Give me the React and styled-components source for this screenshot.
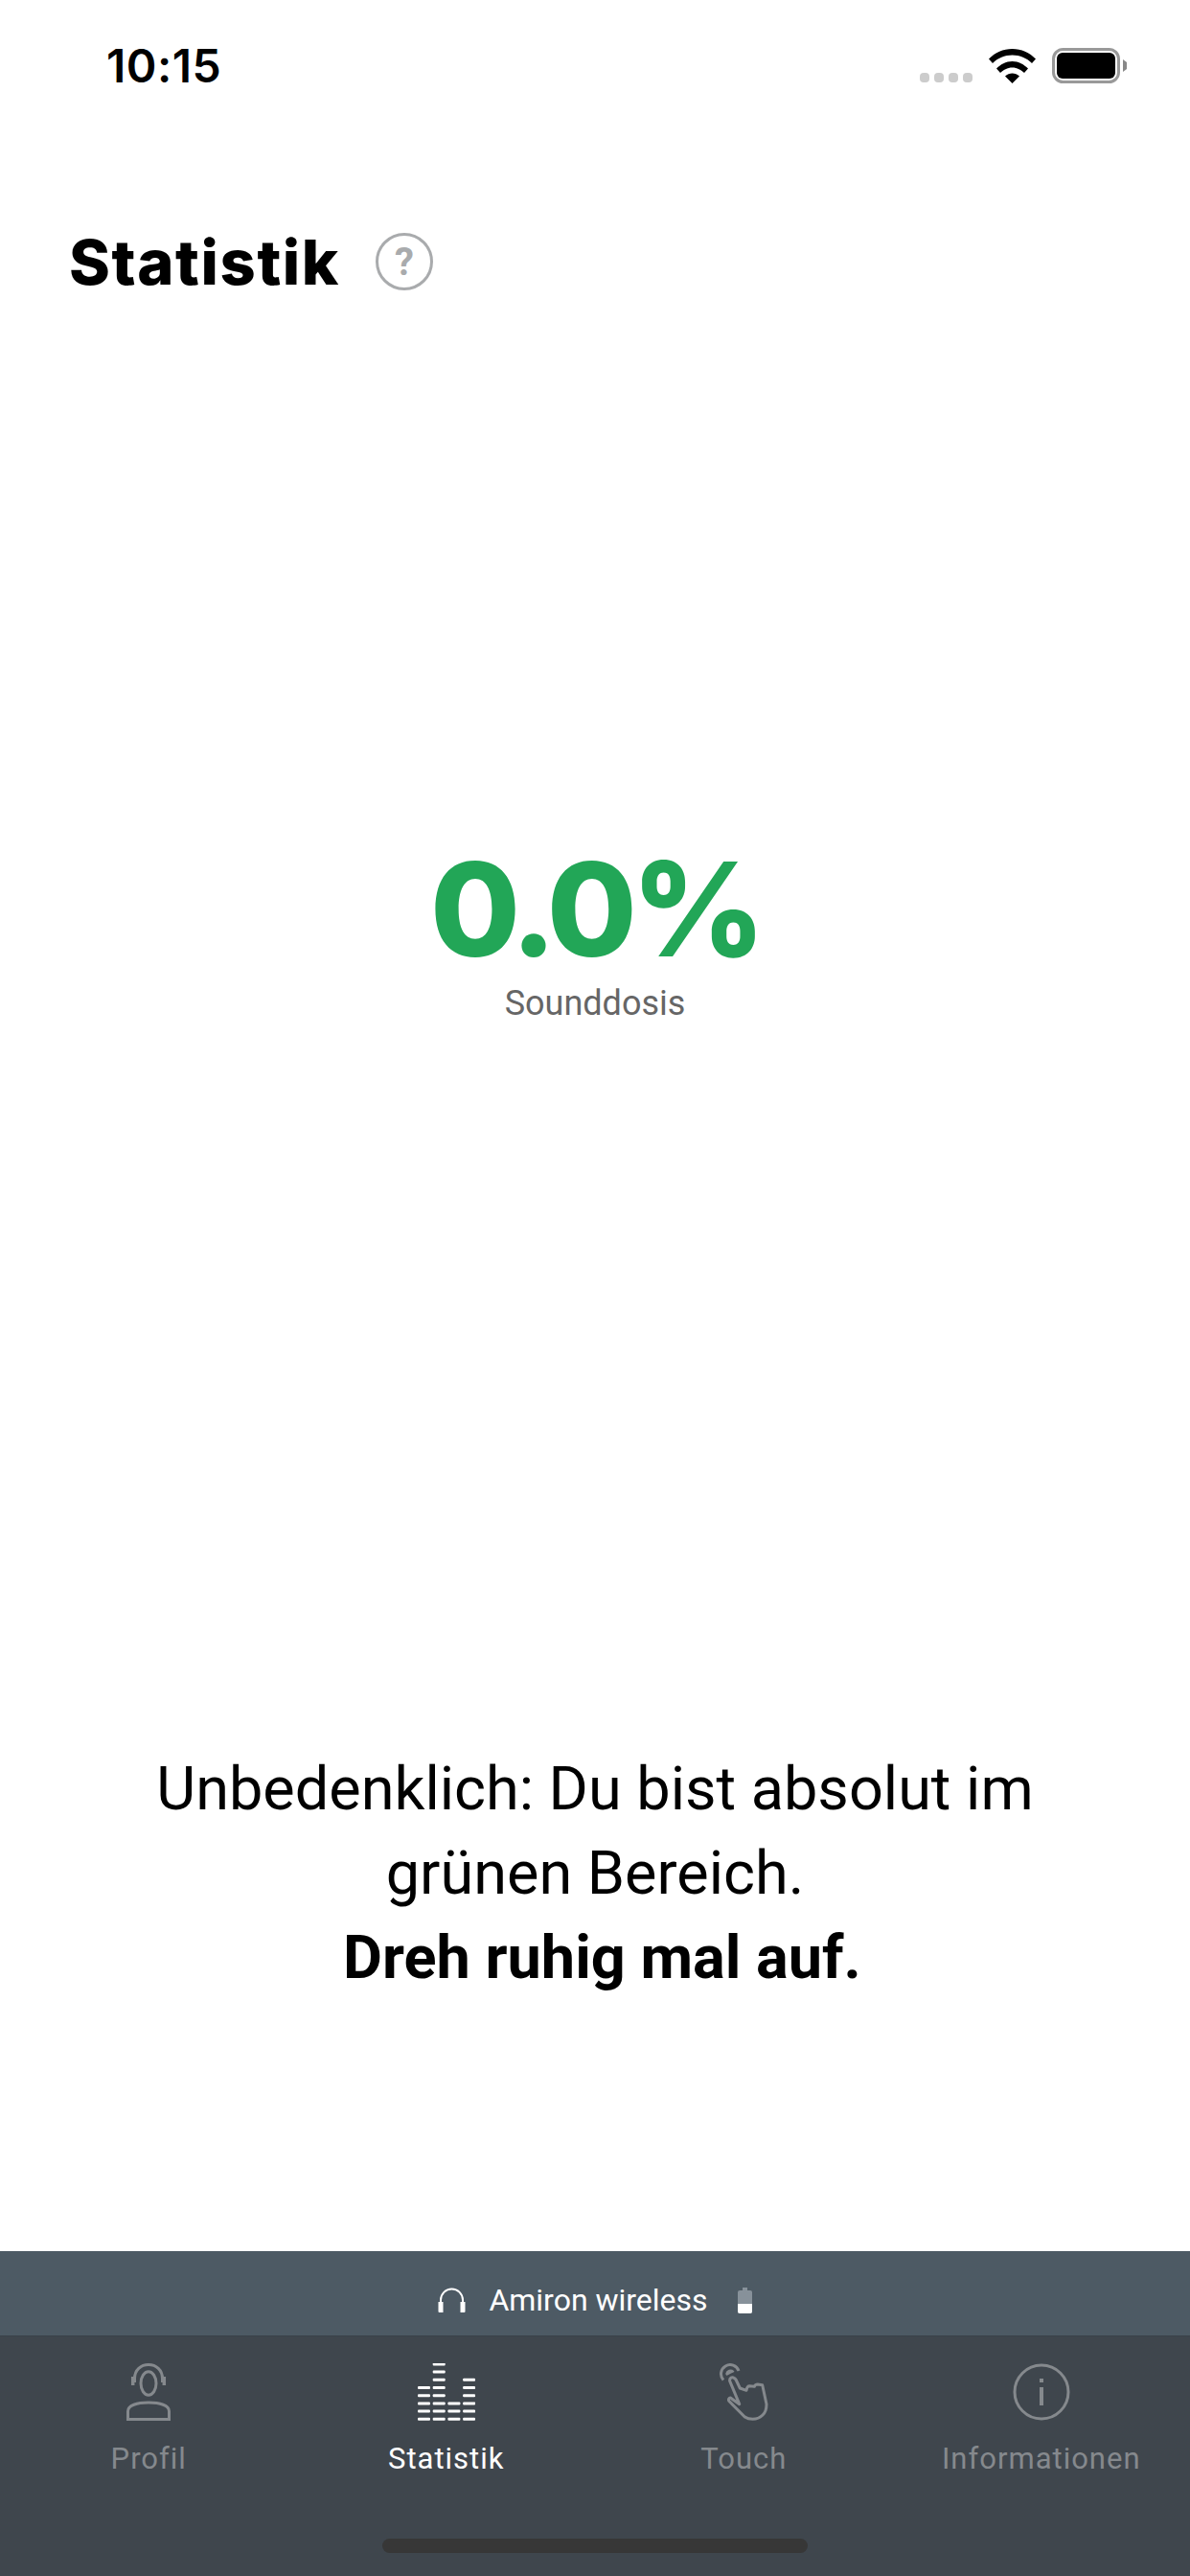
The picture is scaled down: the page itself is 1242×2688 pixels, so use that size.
import React from "react";
import styled, { createGlobalStyle } from "styled-components";

const GlobalStyle = createGlobalStyle`
  html, body {
    margin: 0;
    padding: 0;
    background: #fff;
    font-family: Roboto, "Liberation Sans", sans-serif;
  }
`;

const Page = styled.div`
  width: 1242px;
  height: 2688px;
  display: flex;
  flex-direction: column;
  background: #fff;
  overflow: hidden;
`;

const StatusBar = styled.div`
  height: 136px;
  flex: none;
  display: flex;
  align-items: center;
  justify-content: space-between;
  padding: 0 65px 0 111px;
`;

const Time = styled.span`
  font-family: Inter, sans-serif;
  font-size: 48px;
  font-weight: 600;
  letter-spacing: 0.5px;
  color: #000;
`;

const StatusIcons = styled.div`
  display: flex;
  align-items: flex-end;
  gap: 17px;
`;

const SignalDots = styled.div`
  display: flex;
  gap: 5px;
  margin-bottom: 1px;
`;

const SignalDot = styled.span`
  width: 10px;
  height: 10px;
  border-radius: 4px;
  background: #cccccc;
`;

const Header = styled.header`
  flex: none;
  height: 60px;
  margin-top: 107px;
  padding-left: 72px;
  display: flex;
  align-items: center;
  gap: 37px;
`;

const Title = styled.h1`
  margin: 0;
  font-family: Inter, sans-serif;
  font-size: 65px;
  font-weight: 800;
  letter-spacing: 1.6px;
  color: #000;
`;

const HelpBadge = styled.span`
  width: 60px;
  height: 60px;
  box-sizing: border-box;
  border: 3px solid #a9abad;
  border-radius: 50%;
  display: flex;
  align-items: center;
  justify-content: center;
  font-size: 40px;
  font-weight: 700;
  color: #a9abad;
`;

const Main = styled.main`
  flex: 1;
  display: flex;
  flex-direction: column;
  align-items: center;
  padding-top: 576px;
`;

const Percent = styled.div`
  font-family: Inter, sans-serif;
  font-size: 136px;
  line-height: 140px;
  font-weight: 800;
  letter-spacing: -6px;
  color: #22a657;
`;

const PercentLabel = styled.div`
  margin-top: 8px;
  font-size: 36px;
  line-height: 40px;
  color: #666666;
`;

const Message = styled.p`
  margin: auto 0 262px;
  width: 1000px;
  text-align: center;
  font-size: 63px;
  line-height: 88px;
  color: #000;
`;

const MessageStrong = styled.strong`
  display: block;
  font-weight: 700;
  margin-left: 15px;
`;

const DeviceBar = styled.div`
  flex: none;
  height: 88px;
  box-sizing: border-box;
  padding-top: 14px;
  display: flex;
  align-items: center;
  justify-content: center;
  background: #4d5a64;
  color: #fff;
  font-size: 32px;
`;

const DeviceName = styled.span`
  margin: 0 31px 0 24px;
`;

const TabBar = styled.nav`
  flex: none;
  height: 251px;
  box-sizing: border-box;
  border-top: 1px solid #394149;
  padding-top: 28px;
  display: flex;
  flex-direction: column;
  align-items: center;
  background: #3f464d;
`;

const Tabs = styled.div`
  width: 100%;
  display: grid;
  grid-template-columns: repeat(4, 1fr);
`;

const Tab = styled.div`
  display: flex;
  flex-direction: column;
  align-items: center;
  color: ${({ $active }) => ($active ? "#ffffff" : "#85898d")};
`;

const TabIcon = styled.div`
  height: 60px;
  display: flex;
  align-items: center;
  justify-content: center;
`;

const TabLabel = styled.span`
  margin-top: 22px;
  font-size: 31px;
  line-height: 36px;
  letter-spacing: 1px;
`;

const HomeIndicator = styled.div`
  width: 444px;
  height: 15px;
  margin-top: 65px;
  border-radius: 8px;
  background: #373737;
`;

const WifiIcon = () => (
  <svg width="49" height="36" viewBox="0 0 49 36" fill="#000">
    <path d="M0 10.5C6.5 4 15 0 24.5 0S42.5 4 49 10.5L45 15C39.5 9.5 32.5 6.5 24.5 6.5S9.5 9.5 4 15Z" />
    <path d="M8 20.5C12 16.5 18 13 24.5 13S37 16.5 41 20.5L37 25C34 22 29.5 19.5 24.5 19.5S15 22 12 25Z" />
    <path d="M17 28.5C19 26.5 22 25.5 24.5 25.5S30 26.5 32 28.5L24.5 36Z" />
  </svg>
);

const BatteryIcon = () => (
  <svg width="79" height="37" viewBox="0 0 79 37">
    <rect x="1.5" y="1.5" width="68" height="34" rx="10" fill="none" stroke="#999" strokeWidth="3" />
    <rect x="5" y="5" width="61" height="27" rx="6" fill="#000" />
    <path d="M74 12L78 15V22L74 25Z" fill="#888" />
  </svg>
);

const ProfileIcon = () => (
  <svg width="46" height="60" viewBox="0 0 46 60" fill="none" stroke="currentColor" strokeWidth="3">
    <ellipse cx="23" cy="21" rx="8" ry="12.2" />
    <path d="M8.500 20V16C8.500 7 15 1.500 23 1.500S37.500 7 37.500 16V20" />
    <path d="M6.700 14V23M39.300 14V23" strokeWidth="3.500" />
    <path d="M1.500 58.500V50C1.500 44 11 41 23 41S44.500 44 44.500 50V58.500Z" />
  </svg>
);

// column heights of the little equalizer, rows counted from the bottom
const eqColumns = [5, 8, 3, 6];

const StatsIcon = () => (
  <svg width="60" height="60" viewBox="0 0 60 60" fill="currentColor">
    {eqColumns.map((rows, col) =>
      Array.from({ length: rows }).map((_, row) => (
        <rect key={`${col}-${row}`} x={col * 15.7} y={56.8 - row * 8.2} width="13" height="3" rx="1" />
      ))
    )}
  </svg>
);

const TouchIcon = () => (
  <svg width="52" height="60" viewBox="0 0 52 60" fill="none" stroke="currentColor" strokeWidth="3" strokeLinejoin="round">
    <path d="M5 17.500A9.500 9.500 0 1 1 21 8" />
    <path d="M8 11A4.500 4.500 0 0 1 15.500 8.500L8.500 12Z" fill="currentColor" strokeWidth="1.500" />
    <path d="M11.700 18.700C11 15.500 14 14 16 15.300C17 15.800 17.600 16.500 18 17L22.300 26L29 28.300C29.500 25 31 23.700 32.300 23.700L37.300 24.300C38 22.800 39.500 22 40.700 22L45.700 22.700L50 42.700C50 48 48.500 52 45.700 54.300C42.500 57.500 39 58.300 35.700 58.300C32 58.300 29.500 57.500 27.300 56L10.700 39.300C10 37.500 11 36 12.300 36L21.700 42.700Z" />
  </svg>
);

const InfoIcon = () => (
  <svg width="60" height="60" viewBox="0 0 60 60" fill="none" stroke="currentColor" strokeWidth="3">
    <circle cx="30" cy="30" r="28" />
    <path d="M30 25V44" strokeWidth="4" />
    <path d="M30 16V20" strokeWidth="4" />
  </svg>
);

const HeadphonesIcon = () => (
  <svg width="29" height="26" viewBox="0 0 29 26" fill="none" stroke="#fff">
    <path d="M3 15V13A11.500 11.500 0 0 1 26 13V15" strokeWidth="2" />
    <path d="M0.500 15H5.500V26H1.500Q0.500 26 0.500 25ZM23.500 15H28.500V25Q28.500 26 27.500 26H23.500Z" fill="#fff" stroke="none" />
  </svg>
);

const HeadsetBattery = () => (
  <svg width="15" height="27" viewBox="0 0 15 27">
    <rect x="5" y="0" width="5" height="4" fill="#87919a" />
    <rect x="0" y="3" width="15" height="24" rx="2" fill="#87919a" />
    <path d="M0 17H15V25Q15 27 13 27H2Q0 27 0 25Z" fill="#fff" />
  </svg>
);

const tabs = [
  { label: "Profil", Icon: ProfileIcon },
  { label: "Statistik", Icon: StatsIcon, active: true },
  { label: "Touch", Icon: TouchIcon },
  { label: "Informationen", Icon: InfoIcon },
];

const App = () => {
  return (
    <Page>
      <GlobalStyle />
      <StatusBar>
        <Time>10:15</Time>
        <StatusIcons>
          <SignalDots>
            <SignalDot />
            <SignalDot />
            <SignalDot />
            <SignalDot />
          </SignalDots>
          <WifiIcon />
          <BatteryIcon />
        </StatusIcons>
      </StatusBar>
      <Header>
        <Title>Statistik</Title>
        <HelpBadge>?</HelpBadge>
      </Header>
      <Main>
        <Percent>0.0%</Percent>
        <PercentLabel>Sounddosis</PercentLabel>
        <Message>
          Unbedenklich: Du bist absolut im
          <br />
          grünen Bereich.
          <MessageStrong>Dreh ruhig mal auf.</MessageStrong>
        </Message>
      </Main>
      <DeviceBar>
        <HeadphonesIcon />
        <DeviceName>Amiron wireless</DeviceName>
        <HeadsetBattery />
      </DeviceBar>
      <TabBar>
        <Tabs>
          {tabs.map(({ label, Icon, active }) => (
            <Tab key={label} $active={active}>
              <TabIcon>
                <Icon />
              </TabIcon>
              <TabLabel>{label}</TabLabel>
            </Tab>
          ))}
        </Tabs>
        <HomeIndicator />
      </TabBar>
    </Page>
  );
};

export default App;
